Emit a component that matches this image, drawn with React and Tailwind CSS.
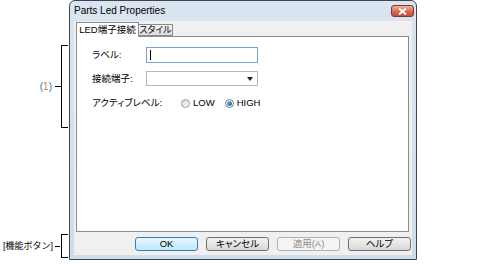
export default function App() {
  const buttons = [
    { label: "OK", kind: "default" },
    { label: "キャンセル", kind: "normal" },
    { label: "適用(A)", kind: "disabled" },
    { label: "ヘルプ", kind: "normal" },
  ];

  return (
    <div className="w-[477px] h-[264px] bg-white flex text-black font-['Liberation_Sans','Noto_Sans_CJK_JP',sans-serif] overflow-hidden">
      {/* Callouts */}
      <div className="w-[69px] flex flex-col">
        <div className="h-[45px]" />
        <div className="h-[83px] flex items-center">
          <span className="ml-auto text-[10px] leading-none">
            <span className="text-[#2f6fc4]">(</span>
            <span className="text-[#d9822b]">1</span>
            <span className="text-[#2f6fc4]">)</span>
          </span>
          <div className="w-[6px] h-px bg-black ml-[3px]" />
          <div className="w-[7px] h-full border-l border-t border-b border-black mr-[1px]" />
        </div>
        <div className="h-[106px]" />
        <div className="h-[24px] flex items-center">
          <span className="ml-[3px] text-[9px] leading-none whitespace-nowrap">[機能ボタン]</span>
          <div className="ml-auto w-[5px] h-px bg-black mr-[1px]" />
          <div className="w-[7px] h-full border-l border-t border-b border-black mr-[1px]" />
        </div>
      </div>

      {/* Dialog */}
      <div className="w-[348px] h-[260px] rounded-t-[6px] border border-[#3b4654] bg-gradient-to-b from-[#dbe5f1] to-[#cfdceb] flex flex-col">
        <div className="h-[20px] flex items-center pl-[4px] pr-[2px]">
          <span className="text-[10px] leading-none">Parts Led Properties</span>
          <div className="ml-auto w-[23px] h-[12px] rounded-[3px] border border-[#7a3a2e] bg-gradient-to-b from-[#eeb6a4] via-[#d8705a] to-[#c4503a] flex items-center justify-center">
            <svg width="9" height="7" viewBox="0 0 9 7">
              <path d="M1 0.5 L8 6.5 M8 0.5 L1 6.5" stroke="white" strokeWidth="1.8" />
            </svg>
          </div>
        </div>

        <div className="flex-1 mx-[4px] mb-[4px] bg-[#f0f0f0] flex flex-col pl-[2px] pr-[1px] pt-[1px] pb-[4px] text-[9.5px] [font-feature-settings:'palt']">
          {/* Tabs */}
          <div className="h-[14px] flex items-end">
            <div className="w-[63px] h-[15px] mb-[-1px] relative z-10 bg-white border border-b-0 border-[#898c95] flex items-center justify-center leading-none whitespace-nowrap">
              LED端子接続
            </div>
            <div className="w-[35px] h-[12px] ml-[-1px] border border-[#898c95] bg-gradient-to-b from-[#f2f2f2] to-[#dcdcdc] flex items-center justify-center leading-none whitespace-nowrap text-[9px]">
              スタイル
            </div>
          </div>

          {/* Panel */}
          <div className="flex-1 mr-[2px] bg-white border border-[#898c95] pl-[15px] pt-[10px] flex flex-col">
            <div className="h-[16px] flex items-center">
              <span className="w-[54px] leading-none">ラベル:</span>
              <div className="w-[112px] h-[16px] border border-[#7ba2d0] flex items-center pl-[3px]">
                <div className="w-px h-[10px] bg-black" />
              </div>
            </div>
            <div className="h-[15px] mt-[8px] flex items-center">
              <span className="w-[54px] leading-none">接続端子:</span>
              <div className="w-[112px] h-[15px] border border-[#b5b8bd] flex items-center justify-end pr-[4px]">
                <svg width="6" height="4" viewBox="0 0 6 4">
                  <path d="M0 0 H6 L3 4 Z" fill="#222" />
                </svg>
              </div>
            </div>
            <div className="h-[14px] mt-[10px] flex items-center">
              <span className="w-[89px] leading-none whitespace-nowrap">アクティブレベル:</span>
              <div className="w-[9px] h-[9px] rounded-full border border-[#9a9a9a] bg-gradient-to-br from-[#d8d8d8] to-[#fafafa]" />
              <span className="ml-[3px] leading-none">LOW</span>
              <div className="w-[9px] h-[9px] ml-[10px] rounded-full border border-[#6d7c8c] bg-white flex items-center justify-center">
                <div className="w-[5px] h-[5px] rounded-full bg-gradient-to-br from-[#6fc3f0] to-[#175a8e]" />
              </div>
              <span className="ml-[3px] leading-none">HIGH</span>
            </div>
          </div>

          {/* Buttons */}
          <div className="h-[14px] mt-[5px] flex justify-end gap-[8px]">
            {buttons.map((b) => (
              <div
                key={b.label}
                className={`w-[63px] h-[14px] rounded-[3px] border flex items-center justify-center leading-none ${
                  b.kind === "default"
                    ? "border-[#3c7fb1] bg-gradient-to-b from-[#eaf6fd] to-[#bee6fd]"
                    : b.kind === "disabled"
                    ? "border-[#adb2b5] bg-[#f4f4f4] text-[#8d8d8d]"
                    : "border-[#707070] bg-gradient-to-b from-[#f2f2f2] to-[#d8d8d8]"
                }`}
              >
                {b.label}
              </div>
            ))}
          </div>
        </div>
      </div>
    </div>
  );
}
